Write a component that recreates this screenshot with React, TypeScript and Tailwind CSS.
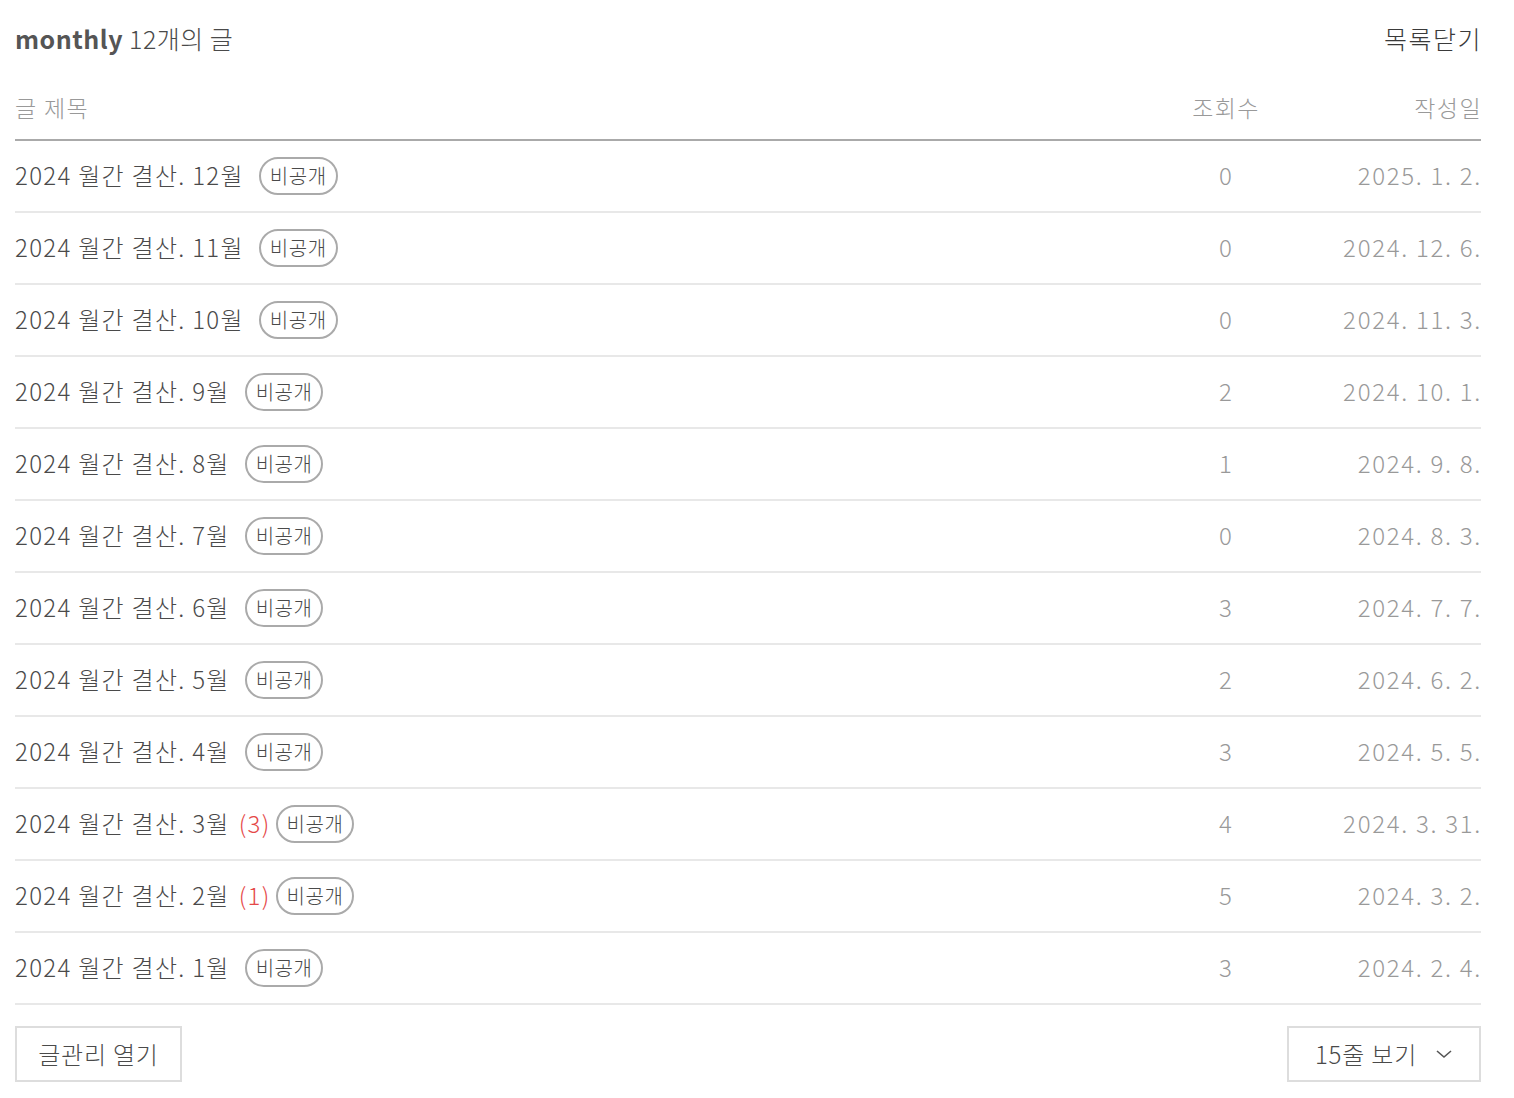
const rows = [
  { title: "2024 월간 결산. 12월", views: 0, date: "2025. 1. 2." },
  { title: "2024 월간 결산. 11월", views: 0, date: "2024. 12. 6." },
  { title: "2024 월간 결산. 10월", views: 0, date: "2024. 11. 3." },
  { title: "2024 월간 결산. 9월", views: 2, date: "2024. 10. 1." },
  { title: "2024 월간 결산. 8월", views: 1, date: "2024. 9. 8." },
  { title: "2024 월간 결산. 7월", views: 0, date: "2024. 8. 3." },
  { title: "2024 월간 결산. 6월", views: 3, date: "2024. 7. 7." },
  { title: "2024 월간 결산. 5월", views: 2, date: "2024. 6. 2." },
  { title: "2024 월간 결산. 4월", views: 3, date: "2024. 5. 5." },
  { title: "2024 월간 결산. 3월", views: 4, date: "2024. 3. 31.", comments: 3 },
  { title: "2024 월간 결산. 2월", views: 5, date: "2024. 3. 2.", comments: 1 },
  { title: "2024 월간 결산. 1월", views: 3, date: "2024. 2. 4." },
];

function Badge() {
  return (
    <span className="inline-flex h-[38px] items-center rounded-full border-2 border-[#aaa] px-[9px] text-[20px] tracking-[0.5px] text-[#4a4a4a]">
      비공개
    </span>
  );
}

export default function App() {
  return (
    <div
      className="min-h-screen bg-white"
      style={{ fontFamily: '"Noto Sans CJK KR", "Noto Sans", sans-serif' }}
    >
      <div className="ml-[15px] w-[1466px]">
        <div className="flex h-[80px] items-center justify-between pb-[3px]">
          <h2 className="text-[25px] font-light tracking-[0.5px] text-[#4a4a4a]">
            <span className="font-bold text-[#555]">monthly</span> 12개의 글
          </h2>
          <button className="mr-[-1px] text-[25px] font-light tracking-[1.5px] text-[#3a3a3a]">목록닫기</button>
        </div>

        <div className="flex h-[61px] items-center border-b-2 border-[#aaa] pb-[4px] text-[23px] font-light tracking-[1.4px] text-[#999]">
          <div className="flex-1">글 제목</div>
          <div className="w-[70px] text-center">조회수</div>
          <div className="mr-[-1px] w-[221px] text-right">작성일</div>
        </div>

        {rows.map((r) => (
          <div
            key={r.title}
            className="flex h-[72px] items-center border-b-2 border-[#e8e8e8] pb-[2px] text-[24px] font-light tracking-[1.3px]"
          >
            <div className="flex flex-1 items-center text-[#4a4a4a]">
              <span>{r.title}</span>
              {r.comments ? (
                <>
                  <span className="ml-[9px] text-[#e54848]">({r.comments})</span>
                  <span className="ml-[5px]">
                    <Badge />
                  </span>
                </>
              ) : (
                <span className="ml-[15px]">
                  <Badge />
                </span>
              )}
            </div>
            <div className="w-[70px] text-center text-[#999]">{r.views}</div>
            <div className="mr-[-1px] w-[221px] text-right tracking-[1.7px] text-[#999]">{r.date}</div>
          </div>
        ))}

        <div className="mt-[21px] flex items-start justify-between">
          <button className="flex h-[56px] w-[167px] items-center justify-center border-2 border-[#ddd] text-[24px] font-light tracking-[0.8px] text-[#4a4a4a]">
            글관리 열기
          </button>
          <button className="flex h-[56px] w-[194px] items-center justify-center gap-[18px] border-2 border-[#ddd] text-[24px] font-light tracking-[0.8px] text-[#4a4a4a]">
            <span>15줄 보기</span>
            <svg width="18" height="10" viewBox="0 0 18 10" fill="none">
              <path d="M2 2l7 6 7-6" stroke="#555" strokeWidth="1.6" />
            </svg>
          </button>
        </div>
      </div>
    </div>
  );
}
